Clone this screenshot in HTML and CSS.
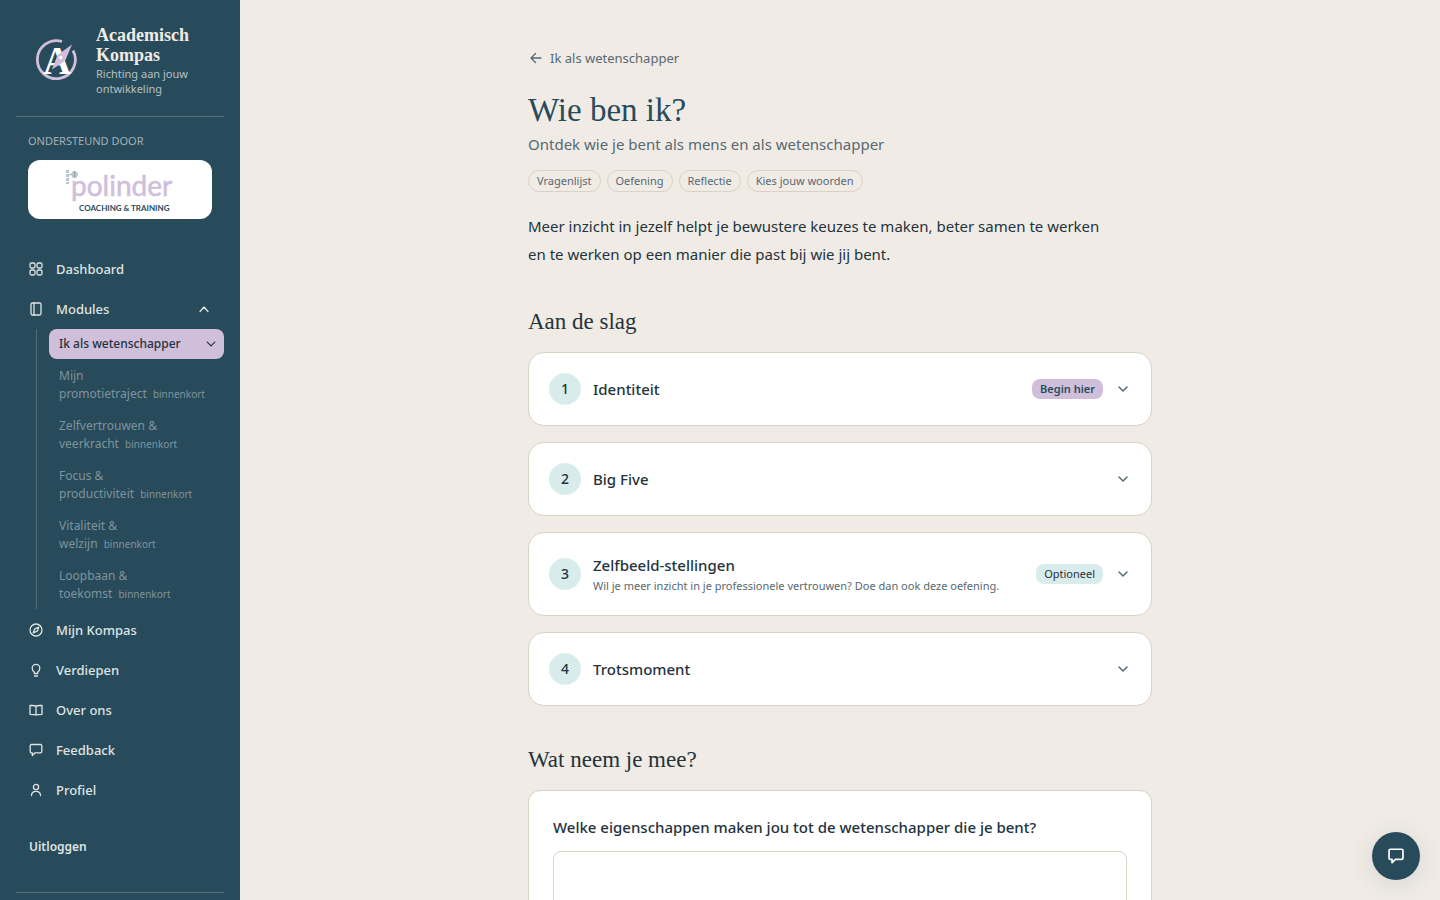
FILE: index.html
```html
<!DOCTYPE html>
<html lang="nl">

<head>
  <meta charset="UTF-8">
  <meta name="viewport" content="width=device-width, initial-scale=1.0">
  <title>Wie ben ik? - Academisch Kompas</title>
  <link rel="stylesheet" href="styles.css">
</head>

<body>
  <div class="layout">

    <!-- Sidebar -->
    <aside class="sidebar">
      <a class="brand" href="#">
        <svg class="brand-logo" viewBox="0 0 60 60" aria-hidden="true">
          <path d="M34 10.500A19 19 0 1 0 45 19.500" fill="none" stroke="#cfbfdb" stroke-width="2.800"/>
          <text x="29" y="43" text-anchor="middle" class="brand-letter">A</text>
          <path d="M44 13.500L37 30 24 38.500 29.500 24Z" fill="#cfbfdb"/>
          <circle cx="32.700" cy="26.500" r="1.800" fill="#fff"/>
        </svg>
        <span class="brand-text">
          <span class="brand-name">Academisch Kompas</span>
          <span class="brand-tagline">Richting aan jouw ontwikkeling</span>
        </span>
      </a>

      <div class="sponsor">
        <p class="sponsor-label">ONDERSTEUND DOOR</p>
        <div class="sponsor-card">
          <svg class="sponsor-logo" viewBox="0 0 120 52" role="img" aria-label="Polinder coaching &amp; training">
            <path d="M7.500 6V20" stroke="#b9c6cb" stroke-width="3" stroke-dasharray="3 1"/>
            <path d="M9 10.500H18" stroke="#b9c6cb" stroke-width="1.500"/>
            <ellipse cx="14.500" cy="10.500" rx="3.200" ry="3.500" fill="#b9c6cb"/>
            <path d="M14.500 7V14" stroke="#93a6ae" stroke-width="1"/>
            <text x="11" y="32" class="logo-word">polinder</text>
            <text x="19" y="47" class="logo-sub">COACHING &amp; TRAINING</text>
          </svg>
        </div>
      </div>

      <nav class="nav">
        <a class="nav-item" href="#">
          <svg class="icon" viewBox="0 0 16 16"><rect x="2" y="2" width="5" height="5" rx="1.500"/><rect x="9" y="2" width="5" height="5" rx="1.500"/><rect x="2" y="9" width="5" height="5" rx="1.500"/><rect x="9" y="9" width="5" height="5" rx="1.500"/></svg>
          Dashboard
        </a>
        <button class="nav-item" type="button" aria-expanded="true">
          <svg class="icon" viewBox="0 0 16 16"><rect x="3" y="2" width="10" height="12" rx="1.500"/><path d="M6 2V14"/></svg>
          Modules
          <svg class="icon nav-chevron" viewBox="0 0 16 16"><path d="M4 10.500L8 6L12 10.500"/></svg>
        </button>

        <div class="subnav">
          <a class="subnav-item active" href="#">
            Ik als wetenschapper
            <svg class="icon icon-small" viewBox="0 0 16 16"><path d="M3 5.500L8 10.500L13 5.500"/></svg>
          </a>
          <span class="subnav-item">Mijn<br>promotietraject <small>binnenkort</small></span>
          <span class="subnav-item">Zelfvertrouwen &amp;<br>veerkracht <small>binnenkort</small></span>
          <span class="subnav-item">Focus &amp;<br>productiviteit <small>binnenkort</small></span>
          <span class="subnav-item">Vitaliteit &amp;<br>welzijn <small>binnenkort</small></span>
          <span class="subnav-item">Loopbaan &amp;<br>toekomst <small>binnenkort</small></span>
        </div>

        <a class="nav-item" href="#">
          <svg class="icon" viewBox="0 0 16 16"><circle cx="8" cy="8" r="6"/><path d="M10.800 5.200L9.200 9.200L5.200 10.800L6.800 6.800Z"/></svg>
          Mijn Kompas
        </a>
        <a class="nav-item" href="#">
          <svg class="icon" viewBox="0 0 16 16"><path d="M6.300 11.500V10C5 9.300 4.200 8 4.200 6.200A3.800 3.800 0 0 1 11.800 6.200C11.800 8 11 9.300 9.700 10V11.500ZM6.500 14H9.500"/></svg>
          Verdiepen
        </a>
        <a class="nav-item" href="#">
          <svg class="icon" viewBox="0 0 16 16"><path d="M8 4.200C7 3.300 6 3.500 2 3.500V12.300C6 12.300 7 12.300 8 13C9 12.300 10 12.300 14 12.300V3.500C10 3.500 9 3.300 8 4.200ZM8 4.200V13"/></svg>
          Over ons
        </a>
        <a class="nav-item" href="#">
          <svg class="icon" viewBox="0 0 16 16"><path d="M3.500 2.500H12.500A1.300 1.300 0 0 1 13.800 3.800V9.500A1.300 1.300 0 0 1 12.500 10.800H7L4.300 13.500V10.800H3.500A1.300 1.300 0 0 1 2.200 9.500V3.800A1.300 1.300 0 0 1 3.500 2.500Z"/></svg>
          Feedback
        </a>
        <a class="nav-item" href="#">
          <svg class="icon" viewBox="0 0 16 16"><circle cx="8" cy="5" r="2.600"/><path d="M3.500 13.500C3.500 10.800 5.300 9.300 8 9.300S12.500 10.800 12.500 13.500"/></svg>
          Profiel
        </a>
      </nav>

      <button class="logout" type="button">Uitloggen</button>
      <div class="sidebar-footer"></div>
    </aside>

    <!-- Page content -->
    <main class="main">
      <div class="content">
        <a class="back-link" href="#">
          <svg class="icon" viewBox="0 0 16 16"><path d="M13 8H3M7.500 3.500L3 8L7.500 12.500"/></svg>
          Ik als wetenschapper
        </a>

        <h1>Wie ben ik?</h1>
        <p class="subtitle">Ontdek wie je bent als mens en als wetenschapper</p>

        <ul class="tags">
          <li>Vragenlijst</li>
          <li>Oefening</li>
          <li>Reflectie</li>
          <li>Kies jouw woorden</li>
        </ul>

        <p class="intro">Meer inzicht in jezelf helpt je bewustere keuzes te maken, beter samen te werken en te werken op een manier die past bij wie jij bent.</p>

        <h2>Aan de slag</h2>
        <div class="steps">
          <button class="step" type="button">
            <span class="step-number">1</span>
            <span class="step-title">Identiteit</span>
            <span class="badge badge-start">Begin hier</span>
            <svg class="icon" viewBox="0 0 16 16"><path d="M4 6L8 10L12 6"/></svg>
          </button>
          <button class="step" type="button">
            <span class="step-number">2</span>
            <span class="step-title">Big Five</span>
            <svg class="icon" viewBox="0 0 16 16"><path d="M4 6L8 10L12 6"/></svg>
          </button>
          <button class="step" type="button">
            <span class="step-number">3</span>
            <span class="step-title">Zelfbeeld-stellingen
              <span class="step-note">Wil je meer inzicht in je professionele vertrouwen? Doe dan ook deze oefening.</span>
            </span>
            <span class="badge">Optioneel</span>
            <svg class="icon" viewBox="0 0 16 16"><path d="M4 6L8 10L12 6"/></svg>
          </button>
          <button class="step" type="button">
            <span class="step-number">4</span>
            <span class="step-title">Trotsmoment</span>
            <svg class="icon" viewBox="0 0 16 16"><path d="M4 6L8 10L12 6"/></svg>
          </button>
        </div>

        <h2>Wat neem je mee?</h2>
        <div class="reflection">
          <label for="reflection-answer">Welke eigenschappen maken jou tot de wetenschapper die je bent?</label>
          <textarea id="reflection-answer" rows="5"></textarea>
        </div>
      </div>
    </main>
  </div>

  <!-- Floating feedback button -->
  <button class="chat-button" type="button" aria-label="Feedback geven">
    <svg class="icon" viewBox="0 0 16 16"><path d="M3 2H13A1.200 1.200 0 0 1 14.200 3.200V9.800A1.200 1.200 0 0 1 13 11H7.500L4.500 14V11H3A1.200 1.200 0 0 1 1.800 9.800V3.200A1.200 1.200 0 0 1 3 2Z"/></svg>
  </button>
</body>

</html>
```
FILE: styles.css
```css
/* Reset styles */
* {
  margin: 0;
  padding: 0;
  box-sizing: border-box;
}

body {
  font-family: "Noto Sans", "Open Sans", sans-serif;
  font-size: 15px;
  color: #24333c;
  background: #f0ebe5;
}

button,
textarea {
  font: inherit;
  color: inherit;
}

button {
  border: none;
  background: none;
  text-align: left;
  cursor: pointer;
}

a {
  color: inherit;
  text-decoration: none;
}

ul {
  list-style: none;
}

.icon {
  width: 16px;
  height: 16px;
  flex-shrink: 0;
  fill: none;
  stroke: currentColor;
  stroke-width: 1.3;
  stroke-linecap: round;
  stroke-linejoin: round;
}

.icon-small {
  width: 12px;
  height: 12px;
  stroke-width: 1.7;
}

.layout {
  display: flex;
  height: 100vh;
}

/* Sidebar */
.sidebar {
  display: flex;
  flex-direction: column;
  flex-shrink: 0;
  width: 240px;
  padding: 25px 16px 0;
  overflow: hidden;
  background: #284b5b;
  color: #dfe4e3;
}

.brand {
  display: flex;
  align-items: center;
  gap: 8px;
  padding: 0 12px 20px;
  border-bottom: 1px solid #536f7b;
}

.brand-logo {
  width: 60px;
  height: 60px;
  flex-shrink: 0;
}

.brand-letter {
  font: bold 39px "Liberation Serif", serif;
  fill: #fff;
}

.brand-text span {
  display: block;
}

.brand-name {
  font: bold 18px/20px "Liberation Serif", serif;
  color: #f0ebe5;
}

.brand-tagline {
  margin-top: 1px;
  font-size: 11px;
  line-height: 15px;
  color: #b4c0c2;
}

.sponsor {
  padding: 16px 12px 30px;
}

.sponsor-label {
  font-size: 11px;
  line-height: 16px;
  margin-bottom: 11px;
  color: #a3b1b5;
}

.sponsor-card {
  display: flex;
  justify-content: center;
  padding: 4px;
  height: 59px;
  border-radius: 12px;
  background: #fff;
}

.sponsor-logo {
  width: 120px;
  height: 52px;
}

.logo-word {
  font: 28px Lato, sans-serif;
  fill: #cfbfdb;
  stroke: #cfbfdb;
  stroke-width: 0.5;
}

.logo-sub {
  font: bold 8px Lato, sans-serif;
  fill: #284b5b;
}

.nav-item {
  display: flex;
  align-items: center;
  gap: 12px;
  width: 100%;
  height: 40px;
  padding: 0 12px;
  font-size: 13px;
  font-weight: 500;
}

.nav-chevron {
  margin-left: auto;
}

.subnav {
  display: flex;
  flex-direction: column;
  gap: 2px;
  margin-left: 20px;
  margin-bottom: 1px;
  padding-left: 12px;
  border-left: 1px solid #536f7b;
}

.subnav-item {
  padding: 6px 10px;
  font-size: 12px;
  line-height: 18px;
  color: #7e939b;
}

.subnav-item small {
  margin-left: 3px;
  font-size: 10px;
  line-height: 1;
}

.subnav-item.active {
  display: flex;
  align-items: center;
  justify-content: space-between;
  padding-right: 7px;
  border-radius: 8px;
  background: #cfbfdb;
  color: #24333c;
  font-weight: 500;
}

.logout {
  margin-top: 27px;
  padding: 0 13px;
  font-size: 12px;
  line-height: 20px;
  font-weight: 600;
}

.sidebar-footer {
  margin-top: 35px;
  border-top: 1px solid #536f7b;
}

/* Page content */
.main {
  flex: 1;
  overflow: hidden;
}

.content {
  max-width: 672px;
  margin: 0 auto;
  padding: 48px 24px;
}

.back-link {
  display: inline-flex;
  align-items: center;
  gap: 6px;
  font-size: 13px;
  line-height: 20px;
  color: #586972;
}

h1,
h2 {
  font-family: "Liberation Serif", serif;
  font-weight: normal;
}

h1 {
  margin-top: 20px;
  font-size: 33px;
  line-height: 40px;
  color: #284b5b;
}

.subtitle {
  margin-top: 2px;
  line-height: 24px;
  color: #586972;
}

.tags {
  display: flex;
  flex-wrap: wrap;
  gap: 6px;
  margin-top: 14px;
}

.tags li {
  padding: 1px 8px;
  font-size: 11px;
  line-height: 18px;
  color: #586972;
  border: 1px solid #d8d2c7;
  border-radius: 12px;
}

.intro {
  max-width: 576px;
  margin-top: 20px;
  line-height: 28px;
}

h2 {
  margin-top: 40px;
  margin-bottom: 16px;
  font-size: 23px;
  line-height: 28px;
}

.steps {
  display: flex;
  flex-direction: column;
  gap: 16px;
}

.step {
  display: flex;
  align-items: center;
  gap: 12px;
  width: 100%;
  padding: 20px;
  background: #fff;
  border: 1px solid #d8d2c7;
  border-radius: 16px;
}

.step-number {
  flex-shrink: 0;
  width: 32px;
  font-size: 14px;
  line-height: 32px;
  font-weight: 500;
  text-align: center;
  border-radius: 50%;
  background: #d9ecec;
}

.step-title {
  flex: 1;
  line-height: 24px;
  font-weight: 500;
}

.step-note {
  display: block;
  font-size: 11px;
  line-height: 18px;
  font-weight: 400;
  color: #586972;
}

.step .icon {
  color: #586972;
  stroke-width: 1.5;
}

.badge {
  padding: 0 8px;
  font-size: 11px;
  line-height: 20px;
  border-radius: 8px;
  background: #d9ecec;
}

.badge-start {
  font-weight: 600;
  color: #284b5b;
  background: #cfbfdb;
}

.reflection {
  padding: 24px;
  background: #fff;
  border: 1px solid #d8d2c7;
  border-radius: 12px;
}

.reflection label {
  display: block;
  margin-bottom: 12px;
  line-height: 24px;
  font-weight: 500;
}

.reflection textarea {
  display: block;
  width: 100%;
  padding: 12px;
  border: 1px solid #d8d2c7;
  border-radius: 8px;
  background: #fff;
  resize: none;
}

/* Floating feedback button */
.chat-button {
  position: fixed;
  right: 20px;
  bottom: 20px;
  display: flex;
  align-items: center;
  justify-content: center;
  width: 48px;
  height: 48px;
  border-radius: 50%;
  background: #284b5b;
  color: #fff;
  box-shadow: 0 4px 24px rgba(40, 75, 91, 0.12);
}

.chat-button .icon {
  width: 18px;
  height: 18px;
  stroke-width: 1.5;
}
```
